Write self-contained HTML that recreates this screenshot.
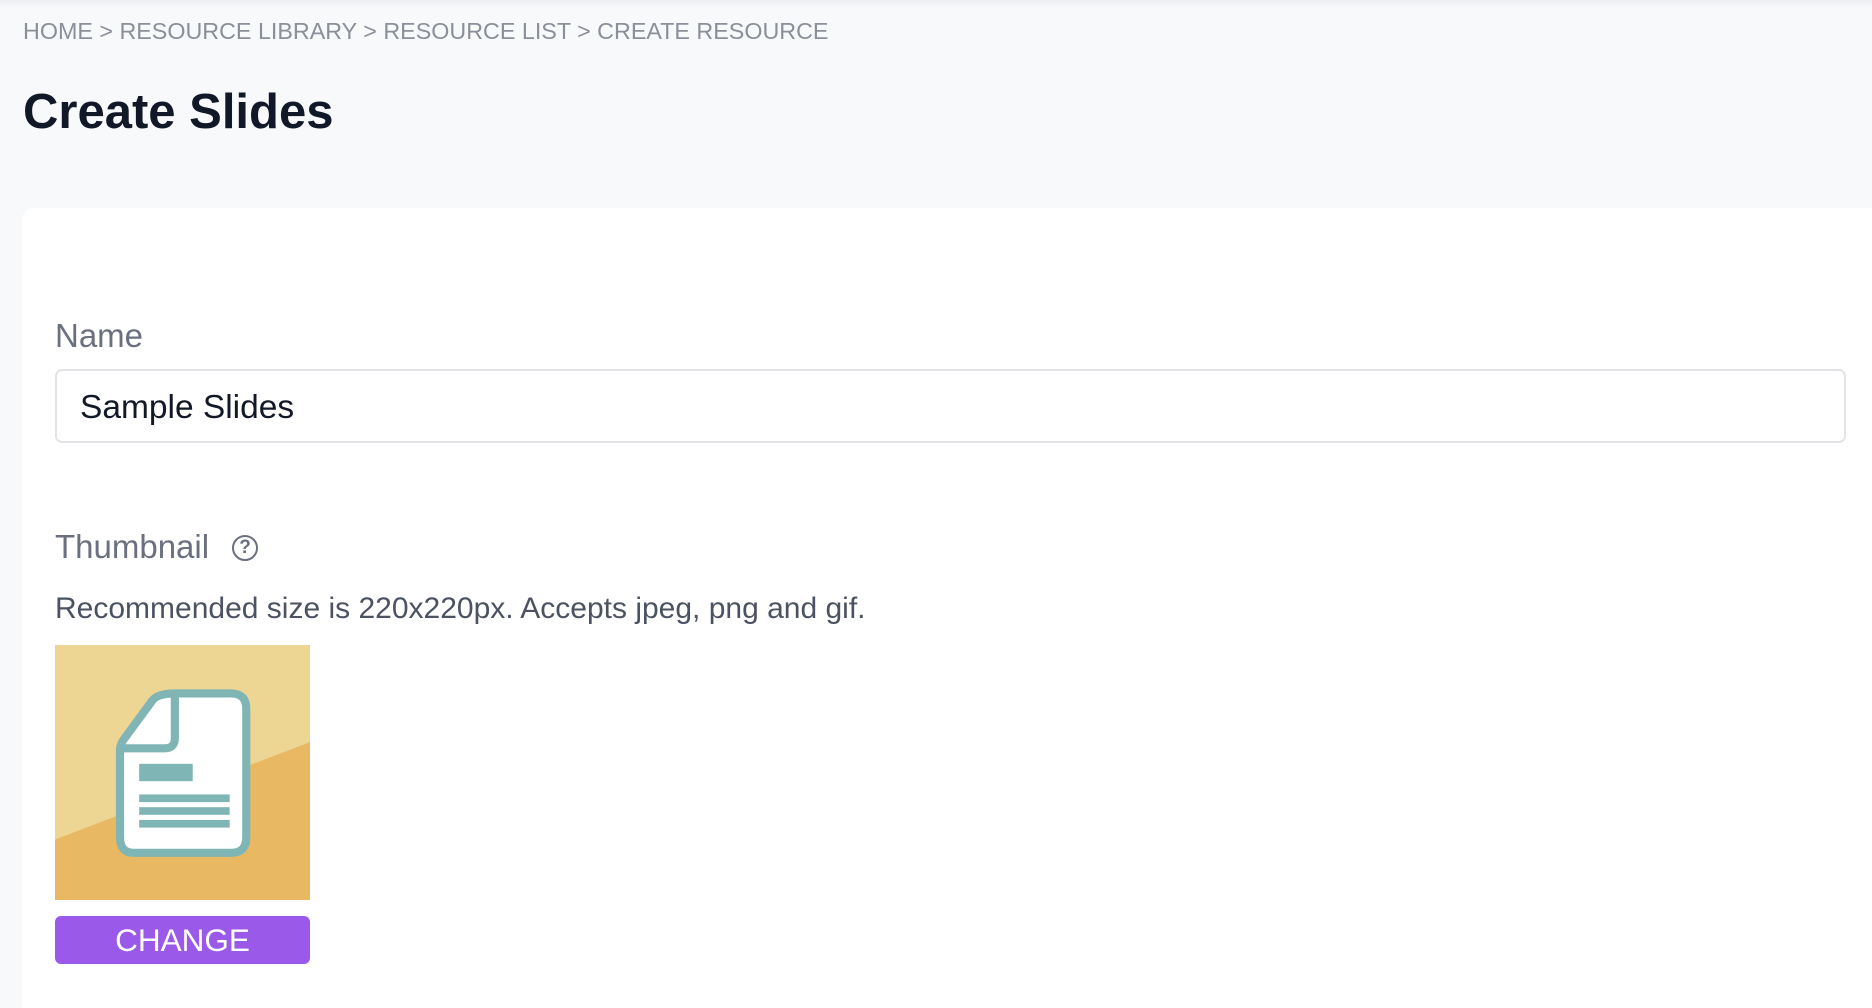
<!DOCTYPE html>
<html><head><meta charset="utf-8"><style>
*{box-sizing:border-box;margin:0;padding:0}
html,body{width:1872px;height:1008px;overflow:hidden;background:#f8f9fb;font-family:"Liberation Sans",sans-serif}
.top{position:absolute;left:0;top:0;width:1872px;height:8px;background:linear-gradient(#eceef1,#f8f9fb)}
.bc{position:absolute;left:23px;top:18px;font-size:23.3px;color:#8b8f99;white-space:nowrap}
h1{position:absolute;left:23px;top:84px;font-size:49px;font-weight:bold;color:#111827}
.card{position:absolute;left:22px;top:208px;width:1850px;height:800px;background:#fff;border-radius:12px 0 0 0}
.lbl{position:absolute;left:55px;font-size:33px;color:#6b7080}
.input{position:absolute;left:55px;top:369px;width:1791px;height:74px;border:2px solid #e3e4e8;border-radius:7px;background:#fff}
.input span{position:absolute;left:23px;top:18px;font-size:33.5px;color:#111827}
.help{position:absolute;left:232px;top:535px;width:26px;height:26px;border:2.5px solid #6b7080;border-radius:50%;font-size:19px;line-height:21px;text-align:center;color:#6b7080;font-weight:bold}
.desc{position:absolute;left:55px;top:592px;font-size:30px;color:#4b5262}
.thumb{position:absolute;left:55px;top:645px;width:255px;height:255px}
.btn{position:absolute;left:55px;top:916px;width:255px;height:48px;background:#9b59ea;border-radius:6px;color:#fff;font-size:31.5px;text-align:center;line-height:48px}
</style></head><body>
<div class="top"></div>
<div class="bc">HOME &gt; RESOURCE LIBRARY &gt; RESOURCE LIST &gt; CREATE RESOURCE</div>
<h1>Create Slides</h1>
<div class="card"></div>
<div class="lbl" style="top:317px">Name</div>
<div class="input"><span>Sample Slides</span></div>
<div class="lbl" style="top:528px">Thumbnail</div>
<div class="help">?</div>
<div class="desc">Recommended size is 220x220px. Accepts jpeg, png and gif.</div>
<svg class="thumb" viewBox="0 0 100 100" preserveAspectRatio="none">
<rect width="100" height="100" fill="#edd593"/>
<polygon points="0,76.3 100,38.1 100,100 0,100" fill="#e9b862"/>
<path d="M47,19 L69,19 Q75,19 75,25 L75,75.5 Q75,81.5 69,81.5 L31,81.5 Q25.5,81.5 25.5,75.5 L25.5,41 Q25.5,39 27,37 L38,22 Q40,19 47,19 Z" fill="#fff" stroke="#80b5b5" stroke-width="3.2"/>
<path d="M47,19 L47,36.5 Q47,40.5 43,40.5 L25.5,40.5" fill="none" stroke="#80b5b5" stroke-width="3.2"/>
<rect x="33" y="46.6" width="21" height="6.8" fill="#80b5b5"/>
<rect x="33" y="58.6" width="35.5" height="3" fill="#80b5b5"/>
<rect x="33" y="63.6" width="35.5" height="3" fill="#80b5b5"/>
<rect x="33" y="68.6" width="35.5" height="3" fill="#80b5b5"/>
</svg>
<div class="btn">CHANGE</div>
</body></html>
